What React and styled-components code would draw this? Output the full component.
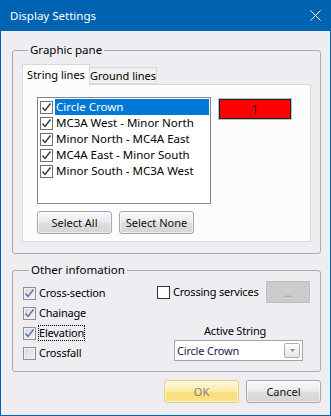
import styled, { createGlobalStyle } from 'styled-components';

const Global = createGlobalStyle`
  body {
    margin: 0;
    background: #eeeef2;
    font-family: 'Segoe UI', 'Noto Sans', 'Open Sans', sans-serif;
    font-size: 11px;
    color: #000;
  }
`;

const STRINGS = [
  'Circle Crown',
  'MC3A West - Minor North',
  'Minor North - MC4A East',
  'MC4A East - Minor South',
  'Minor South - MC3A West',
];

const OTHER = [
  { label: 'Cross-section', checked: true },
  { label: 'Chainage', checked: true },
  { label: 'Elevation', checked: true, focus: true },
  { label: 'Crossfall', checked: false },
];

function Tick({ color }) {
  return (
    <svg width="11" height="11" viewBox="0 0 11 11">
      <path d="M1.5 5.5 L4 8.5 L9.5 1.5" fill="none" stroke={color} strokeWidth="1.4" />
    </svg>
  );
}

export default function App() {
  return (
    <>
      <Global />
      <Window>
        <TitleBar>
          <span>Display Settings</span>
          <svg width="11" height="11" viewBox="0 0 11 11">
            <path d="M0.5 0.5 L10.5 10.5 M10.5 0.5 L0.5 10.5" stroke="#fff" strokeWidth="1" />
          </svg>
        </TitleBar>

        <Body>
          <Group $pad="6px 9px 11px 9px">
            <Legend>Graphic pane</Legend>
            <TabStrip>
              <Tab $active>String lines</Tab>
              <Tab>Ground lines</Tab>
            </TabStrip>
            <TabPanel>
              <PanelRow>
                <List>
                  {STRINGS.map((s, i) => (
                    <ListItem key={s}>
                      <ListCheck>
                        <Tick color="#3a3a3a" />
                      </ListCheck>
                      <ItemText $selected={i === 0}>{s}</ItemText>
                    </ListItem>
                  ))}
                </List>
                <Swatch>1</Swatch>
              </PanelRow>
              <ButtonRow $gap="7px">
                <Button>Select All</Button>
                <Button>Select None</Button>
              </ButtonRow>
            </TabPanel>
          </Group>

          <Group $pad="3px 10px 8px 10px" $mt="8px">
            <Legend>Other infomation</Legend>
            <OtherGrid>
              <CheckColumn>
                {OTHER.map((o) => (
                  <CheckRow key={o.label}>
                    <ClassicCheck>{o.checked && <Tick color="#4f6fb5" />}</ClassicCheck>
                    <CheckLabel $focus={o.focus}>{o.label}</CheckLabel>
                  </CheckRow>
                ))}
              </CheckColumn>
              <RightColumn>
                <ServicesRow>
                  <CheckRow>
                    <PlainCheck />
                    <CheckLabel>Crossing services</CheckLabel>
                  </CheckRow>
                  <DotsButton>...</DotsButton>
                </ServicesRow>
                <ActiveLabel>Active String</ActiveLabel>
                <Combo>
                  <span>Circle Crown</span>
                  <ComboArrow>
                    <svg width="5" height="3" viewBox="0 0 5 3">
                      <path d="M0 0 H5 L2.5 3 Z" fill="#8a8a8a" />
                    </svg>
                  </ComboArrow>
                </Combo>
              </RightColumn>
            </OtherGrid>
          </Group>

          <Footer>
            <Button $primary>OK</Button>
            <Button>Cancel</Button>
          </Footer>
        </Body>
      </Window>
    </>
  );
}

const Window = styled.div`
  width: 331px;
  height: 416px;
  display: flex;
  flex-direction: column;
  box-sizing: border-box;
`;

const TitleBar = styled.div`
  height: 31px;
  flex-shrink: 0;
  background: #0063b1;
  color: #fff;
  display: flex;
  align-items: center;
  justify-content: space-between;
  padding: 0 10px 1px 10px;
  box-sizing: border-box;
  font-size: 11.5px;
`;

const Body = styled.div`
  flex: 1;
  display: flex;
  flex-direction: column;
  padding: 11px 9px 0 11px;
  border: 1px solid #0063b1;
  border-top: none;
  box-sizing: border-box;
`;

const Group = styled.fieldset`
  margin: ${({ $mt }) => $mt || '0'} 0 0 0;
  padding: ${({ $pad }) => $pad};
  border: 1px solid #a9a9a9;
  border-radius: 3px;
  min-width: 0;
`;

const Legend = styled.legend`
  padding: 0 2px;
  margin-left: 6px;
  line-height: 16px;
  font-size: 11.5px;
`;

const TabStrip = styled.div`
  display: flex;
  align-items: flex-end;
  height: 20px;
`;

const Tab = styled.div`
  position: relative;
  z-index: ${({ $active }) => ($active ? 2 : 1)};
  width: 68px;
  height: ${({ $active }) => ($active ? '21px' : '17px')};
  margin-bottom: ${({ $active }) => ($active ? '-1px' : '0')};
  margin-left: ${({ $active }) => ($active ? '0' : '-1px')};
  box-sizing: border-box;
  border: 1px solid #d9d9d9;
  border-bottom: ${({ $active }) => ($active ? 'none' : '1px solid #d9d9d9')};
  background: ${({ $active }) => ($active ? '#fcfcfc' : '#f0f0f0')};
  display: flex;
  align-items: center;
  justify-content: center;
  white-space: nowrap;
  padding-bottom: ${({ $active }) => ($active ? '2px' : '0')};
`;

const TabPanel = styled.div`
  border: 1px solid #d9d9d9;
  background: #fcfcfc;
  padding: 12px 14px 7px 14px;
`;

const PanelRow = styled.div`
  display: flex;
  align-items: flex-start;
  gap: 7px;
`;

const List = styled.div`
  width: 174px;
  height: 107px;
  box-sizing: border-box;
  border: 1px solid #828790;
  background: #fff;
  padding: 1px 1px 0 2px;
`;

const ListItem = styled.div`
  height: 16px;
  display: flex;
  align-items: center;
`;

const ListCheck = styled.span`
  width: 13px;
  height: 13px;
  box-sizing: border-box;
  border: 1px solid #707070;
  background: #fff;
  display: flex;
  align-items: center;
  justify-content: center;
  flex-shrink: 0;
  margin-right: 2px;
`;

const ItemText = styled.span`
  flex: 1;
  height: 16px;
  line-height: 16px;
  padding-left: 1px;
  white-space: nowrap;
  font-size: 11.5px;
  background: ${({ $selected }) => ($selected ? '#0078d7' : 'transparent')};
  color: ${({ $selected }) => ($selected ? '#fff' : '#000')};
`;

const Swatch = styled.div`
  width: 74px;
  height: 22px;
  margin-top: 1px;
  box-sizing: border-box;
  border: 1px solid #b9bfc9;
  box-shadow: inset 0 0 0 1px #222;
  background: #ff0000;
  display: flex;
  align-items: center;
  justify-content: center;
  font-size: 12px;
  color: #222;
`;

const ButtonRow = styled.div`
  display: flex;
  gap: ${({ $gap }) => $gap};
  margin-top: 7px;
`;

const Button = styled.button`
  width: 75px;
  height: 23px;
  padding: 0;
  font: inherit;
  font-size: 11px;
  border-radius: 3px;
  border: 1px solid ${({ $primary }) => ($primary ? '#e8cf7e' : '#a3a6aa')};
  color: ${({ $primary }) => ($primary ? '#7e7e7e' : '#111')};
  background: ${({ $primary }) =>
    $primary
      ? 'linear-gradient(#fef8e0 0%, #fcecac 45%, #f9dc75 60%, #fbe38c 100%)'
      : 'linear-gradient(#f8f8f8 0%, #ececec 45%, #dedede 55%, #d4d4d4 100%)'};
  box-shadow: inset 0 0 0 1px rgba(255, 255, 255, 0.6);
`;

const OtherGrid = styled.div`
  display: grid;
  grid-template-columns: 134px 153px;
  letter-spacing: -0.2px;
`;

const CheckColumn = styled.div`
  display: flex;
  flex-direction: column;
  padding-top: 2px;
`;

const CheckRow = styled.label`
  display: flex;
  align-items: center;
  height: 20px;
  gap: 3px;
  white-space: nowrap;
`;

const ClassicCheck = styled.span`
  width: 13px;
  height: 13px;
  box-sizing: border-box;
  border: 1px solid #8f8f8f;
  background: linear-gradient(135deg, #d6d6d6, #f4f4f4);
  box-shadow: inset 0 0 0 1px #f0f0f0;
  display: flex;
  align-items: center;
  justify-content: center;
`;

const PlainCheck = styled.span`
  width: 13px;
  height: 13px;
  box-sizing: border-box;
  border: 1px solid #333;
  background: #fff;
`;

const CheckLabel = styled.span`
  line-height: 14px;
  outline: ${({ $focus }) => ($focus ? '1px dotted #000' : 'none')};
  outline-offset: 0;
`;

const RightColumn = styled.div`
  display: flex;
  flex-direction: column;
`;

const ServicesRow = styled.div`
  display: flex;
  align-items: center;
  justify-content: space-between;
  height: 22px;
`;

const DotsButton = styled.div`
  width: 44px;
  height: 22px;
  box-sizing: border-box;
  background: #cccccc;
  border: 1px solid #bfbfbf;
  color: #8a8a8a;
  display: flex;
  align-items: center;
  justify-content: center;
`;

const ActiveLabel = styled.div`
  margin-top: 20px;
  padding-left: 47px;
  line-height: 16px;
`;

const Combo = styled.div`
  margin: 1px 0 0 17px;
  width: 129px;
  height: 21px;
  box-sizing: border-box;
  border: 1px solid #a5a5a5;
  background: #fff;
  display: flex;
  align-items: center;
  justify-content: space-between;
  padding: 0 2px 0 2px;
  color: #1a1a4a;
`;

const ComboArrow = styled.span`
  width: 16px;
  height: 15px;
  box-sizing: border-box;
  border: 1px solid #b0b0b0;
  border-radius: 2px;
  background: linear-gradient(#fdfdfd, #e6e6e6);
  display: flex;
  align-items: center;
  justify-content: center;
`;

const Footer = styled.div`
  display: flex;
  justify-content: flex-end;
  gap: 7px;
  margin-top: 8px;
`;
